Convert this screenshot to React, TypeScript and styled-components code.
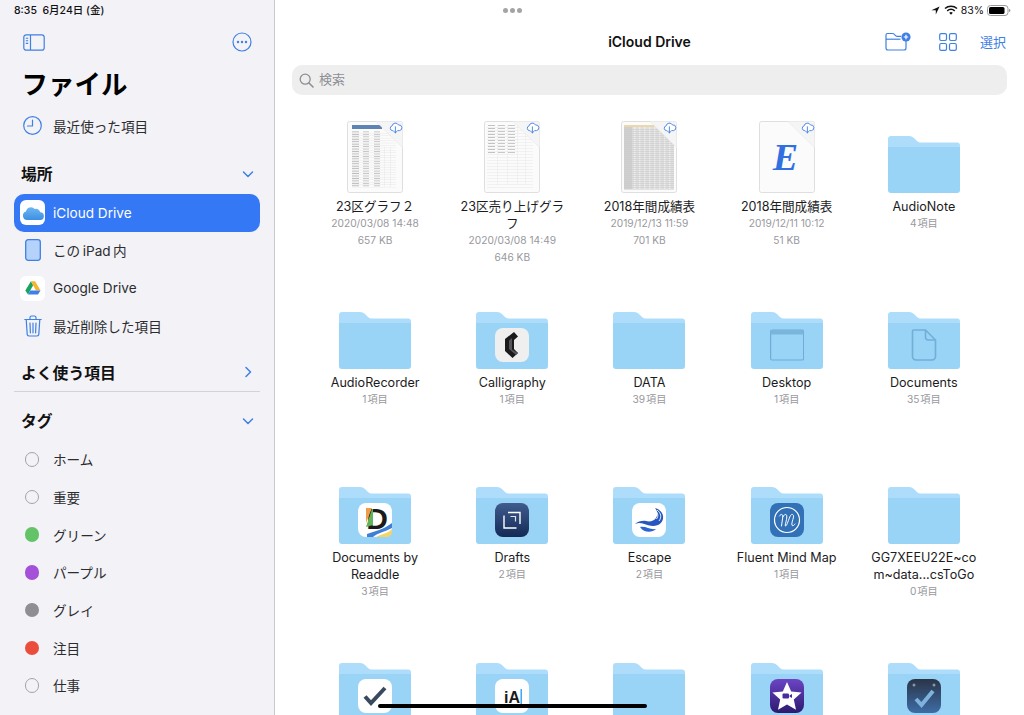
import React from 'react'
import styled, { createGlobalStyle } from 'styled-components'

const GlobalStyle = createGlobalStyle`
  html, body {
    margin: 0;
    height: 715px;
    overflow: hidden;
    background: #fff;
    font-family: Inter, "Noto Sans CJK JP", sans-serif;
    color: #1c1c1e;
  }
`

const BLUE = '#3f80e4'

const Page = styled.div`
  display: flex;
  width: 1024px;
  height: 715px;
  overflow: hidden;
  position: relative;
`

const Sidebar = styled.aside`
  width: 275px;
  flex: none;
  box-sizing: border-box;
  background: #f2f2f7;
  border-right: 1px solid #c9c9cd;
  padding: 0 14px;
`

const Clock = styled.div`
  height: 20px;
  line-height: 21px;
  font-size: 10.5px;
  font-weight: 500;
  color: #111;
  white-space: pre;
`

const SideTools = styled.div`
  height: 44px;
  display: flex;
  align-items: center;
  justify-content: space-between;
  padding: 0 8px 0 9px;
`

const Title = styled.h1`
  margin: 0 0 3px;
  height: 40px;
  line-height: 40px;
  padding-left: 7.5px;
  font-size: 26.5px;
  font-weight: 700;
  color: #000;
`

const Row = styled.div<{ $active?: boolean }>`
  height: 37.7px;
  box-sizing: border-box;
  display: flex;
  align-items: center;
  gap: 8px;
  padding-left: 6px;
  border-radius: 10px;
  font-size: 13.6px;
  color: ${(p) => (p.$active ? '#fff' : '#2c2c2e')};
  background: ${(p) => (p.$active ? '#3478f6' : 'transparent')};
`

const IconSlot = styled.span`
  width: 25px;
  height: 25px;
  flex: none;
  display: flex;
  align-items: center;
  justify-content: center;
`

const Tile = styled(IconSlot)`
  background: #fff;
  border-radius: 6px;
`

const Dot = styled.span<{ $color?: string }>`
  width: 14.5px;
  height: 14.5px;
  margin-right: 1px;
  box-sizing: border-box;
  border-radius: 50%;
  background: ${(p) => p.$color ?? 'transparent'};
  border: ${(p) => (p.$color ? 'none' : '1px solid #a3a3a8')};
`

const Section = styled.div<{ $top: number; $bottom?: number; $line?: boolean }>`
  height: 37.7px;
  margin: ${(p) => p.$top}px 0 ${(p) => p.$bottom ?? 0}px;
  box-sizing: border-box;
  display: flex;
  align-items: center;
  justify-content: space-between;
  padding: 0 6px 0 7px;
  font-size: 15.8px;
  font-weight: 700;
  color: #111;
  border-bottom: ${(p) => (p.$line ? '1px solid #d4d4d8' : 'none')};
`

const Main = styled.main`
  flex: 1;
  min-width: 0;
  padding: 0 17px;
  overflow: hidden;
`

const StatusBar = styled.div`
  height: 20px;
  display: grid;
  grid-template-columns: 211px auto 1fr;
  align-items: center;
`

const Grabber = styled.div`
  display: flex;
  gap: 2px;
`

const GrabDot = styled.span`
  width: 5px;
  height: 5px;
  border-radius: 50%;
  background: #a4a4a8;
`

const StatusRight = styled.div`
  display: flex;
  align-items: center;
  justify-content: flex-end;
  gap: 3px;
  margin-right: -4px;
  font-size: 10.5px;
  font-weight: 400;
  color: #111;
`

const Header = styled.header`
  height: 44px;
  display: grid;
  grid-template-columns: 1fr auto 1fr;
  align-items: center;
`

const HeaderTitle = styled.div`
  font-size: 14px;
  font-weight: 600;
  color: #111;
  margin-top: -1px;
`

const Actions = styled.div`
  display: flex;
  align-items: center;
  justify-content: flex-end;
  gap: 23px;
  margin-top: -1px;
`

const NewFolder = styled.svg`
  margin-right: 5px;
`

const SelectLink = styled.span`
  font-size: 13px;
  color: ${BLUE};
  margin-right: 1px;
  margin-top: -1px;
`

const Search = styled.div`
  height: 30px;
  margin-top: 1px;
  display: flex;
  align-items: center;
  gap: 5px;
  padding-left: 7px;
  border-radius: 10px;
  background: #eeeeef;
  font-size: 13px;
  color: #8e8e93;
`

const SearchText = styled.span`
  margin-top: -3px;
`

const FileGrid = styled.div`
  display: grid;
  grid-template-columns: repeat(5, 137.2px);
  grid-auto-rows: 175.5px;
  margin: 22px 0 0 14.5px;
`

const Cell = styled.div`
  display: flex;
  flex-direction: column;
  align-items: center;
  text-align: center;
`

const ThumbArea = styled.div`
  height: 76px;
  flex: none;
  display: flex;
  align-items: flex-end;
  margin-bottom: 5px;
`

const FolderBox = styled.div`
  position: relative;
  width: 72px;
  height: 57px;
`

const Badge = styled.div`
  position: absolute;
  left: 19px;
  top: 16px;
  width: 34px;
  height: 34px;
`

const Name = styled.div`
  width: 116px;
  font-size: 12.6px;
  line-height: 17px;
  color: #1c1c1e;
  overflow-wrap: anywhere;
`

const Meta = styled.div`
  font-size: 10.2px;
  line-height: 17px;
  color: #98989d;
`

const HomeBar = styled.div`
  position: absolute;
  left: 378px;
  bottom: 7px;
  width: 269px;
  height: 4px;
  border-radius: 2px;
  background: #000;
`

const Folder = ({ children }: { children?: React.ReactNode }) => (
  <FolderBox>
    <svg width="72" height="57" viewBox="0 0 72 57" style={{ display: 'block' }}>
      <path d="M3 0H21Q24 0 26 2L29 5Q30.5 6.5 33 6.5H69Q72 6.5 72 9.5V20H0V3Q0 0 3 0Z" fill="#aeddfb" />
      <path d="M0 11H72V54Q72 57 69 57H3Q0 57 0 54Z" fill="#99d3f6" />
    </svg>
    {children}
  </FolderBox>
)

const Cloud = ({ x, y }: { x: number; y: number }) => (
  <g transform={`translate(${x} ${y})`} fill="none" stroke={BLUE} strokeWidth="0.9" strokeLinecap="round" strokeLinejoin="round">
    <path d="M3.4 8.6H2.8A2.4 2.4 0 0 1 2.6 3.9 3.4 3.4 0 0 1 9 3 2.8 2.8 0 0 1 10 8.6H8.4" fill="#fff" />
    <path d="M5.9 4.8V10.8M4.2 9.2L5.9 10.9 7.6 9.2" />
  </g>
)

const sheetRows = (count: number, top: number, step: number) =>
  Array.from({ length: count }, (_, i) => top + i * step)

const Sheet1 = () => (
  <>
    <rect x="5" y="4" width="30" height="4" fill="#5f83b2" />
    {sheetRows(23, 10.5, 2.45).map((y) => (
      <g key={y}>
        <rect x="5" y={y} width="7" height="0.8" fill="#b0b0b0" />
        <rect x="16" y={y} width="6" height="0.8" fill="#bcbcbc" />
        <rect x="27" y={y} width="6" height="0.8" fill="#bcbcbc" />
        <rect x="5" y={y + 1.5} width="44" height="0.4" fill="#e4e4e4" />
      </g>
    ))}
    <rect x="37" y="26" width="0.4" height="40" fill="#e4e4e4" />
    <rect x="43" y="26" width="0.4" height="40" fill="#e4e4e4" />
  </>
)

const Sheet2 = () => (
  <>
    {sheetRows(10, 4, 3).map((y) => (
      <g key={y}>
        <rect x="4" y={y} width="7" height="0.8" fill="#b4b4b4" />
        <rect x="14" y={y} width="7" height="0.8" fill="#bcbcbc" />
        <rect x="24" y={y} width="7" height="0.8" fill="#bcbcbc" />
      </g>
    ))}
    {sheetRows(21, 4, 3).map((y) => (
      <rect key={y} x="3" y={y + 2} width="46" height="0.4" fill="#e2e2e2" />
    ))}
    {[13, 23, 33, 41].map((x) => (
      <rect key={x} x={x} y="4" width="0.4" height="60" fill="#e6e6e6" />
    ))}
  </>
)

const Sheet3 = () => (
  <>
    <rect x="3" y="4" width="50" height="64" fill="#dedede" />
    <rect x="3" y="4" width="34" height="2" fill="#ead7ab" />
    <rect x="3" y="6" width="8" height="62" fill="#cfcfcf" />
    {[13, 18, 23, 28, 33, 38, 43, 48].map((x) => (
      <rect key={x} x={x} y="6" width="1.4" height="62" fill="#eeeeee" />
    ))}
    {sheetRows(31, 8, 2).map((y) => (
      <rect key={y} x="3" y={y} width="50" height="0.5" fill="#c8c8c8" />
    ))}
  </>
)

const SheetE = () => (
  <text x="26.5" y="49" textAnchor="middle" fontFamily="Liberation Serif, serif" fontWeight="700" fontStyle="italic" fontSize="38" fill="#3270e2">
    E
  </text>
)

const Doc = ({ children }: { children: React.ReactNode }) => (
  <svg width="56" height="72" viewBox="0 0 56 72" style={{ display: 'block' }}>
    <rect x="0.5" y="0.5" width="55" height="71" rx="2" fill="#fbfbfb" stroke="#dfdfdf" />
    {children}
    <path d="M29 0.5H53.5Q55.5 0.5 55.5 2.5V26.5Z" fill="#f5f5f5" />
    <path d="M29 0.5L55.5 26.5" stroke="#e4e4e4" strokeWidth="0.5" fill="none" />
    <Cloud x={42.5} y={1} />
  </svg>
)

const Rounded = ({ fill, children }: { fill: string; children?: React.ReactNode }) => (
  <svg width="34" height="34" viewBox="0 0 34 34" style={{ display: 'block' }}>
    <rect width="34" height="34" rx="8" fill={fill} />
    {children}
  </svg>
)

const CalligraphyIcon = () => (
  <Rounded fill="#efefef">
    <path d="M19 4L23 8.5 19 12V21L23 25 17.5 30 10 23V11Z" fill="#1b1b1b" />
    <path d="M14 12.5L17 10V21.5L23 25 21 27 14 21Z" fill="#55555a" />
  </Rounded>
)

const ReaddleIcon = () => (
  <Rounded fill="#fff">
    <text x="19" y="26" textAnchor="middle" fontFamily="Liberation Sans, sans-serif" fontWeight="700" fontSize="30" fill="#1a1a1a">
      D
    </text>
    <path d="M8 5H14L8 20Z" fill="#ef9d4c" />
    <path d="M8 24L14 6H15V22Z" fill="#62b45a" />
    <path d="M9 31C17 28 25 27 34 20V25C27 29 19 30 15 34H9Z" fill="#3f7fd6" />
    <path d="M18 34C23 31 29 31 34 26V28Q34 34 28 34Z" fill="#f0d668" />
  </Rounded>
)

const DraftsIcon = () => (
  <svg width="34" height="34" viewBox="0 0 34 34" style={{ display: 'block' }}>
    <defs>
      <linearGradient id="drafts" x1="0" y1="0" x2="0" y2="1">
        <stop offset="0" stopColor="#3f5d8e" />
        <stop offset="1" stopColor="#142a56" />
      </linearGradient>
    </defs>
    <rect width="34" height="34" rx="8" fill="url(#drafts)" />
    <path d="M13 9.5H25V21" fill="none" stroke="#fff" strokeWidth="1.4" />
    <path d="M9 12.5V25H21.5" fill="none" stroke="#fff" strokeWidth="1.4" />
    <path d="M15.5 13.5H20.5V18.5" fill="none" stroke="#dfe6f0" strokeWidth="1.2" />
  </svg>
)

const EscapeIcon = () => (
  <Rounded fill="#fff">
    <path d="M3 21C10 18 14 23 21 23 27 23 32 19 31 13 30.5 9 27 6 23 5 26 9 26 12 24 15 22 18 18 19 14 18 11 17.5 6 18 3 21Z" fill="#2657bf" />
    <path d="M8 24C14 23 18 27 24 26 20 30 12 30 8 24Z" fill="#2b66cf" />
    <path d="M21 7C26 8 27 13 24.5 16" fill="none" stroke="#fff" strokeWidth="0.9" />
    <path d="M25 7C29 10 30 14 27 18" fill="none" stroke="#fff" strokeWidth="0.9" />
  </Rounded>
)

const FluentIcon = () => (
  <Rounded fill="#3371b7">
    <circle cx="17" cy="17" r="12.5" fill="none" stroke="#fff" strokeWidth="1.2" />
    <path d="M9.5 13C11 10.5 13 11 12.8 14L11.5 23M12.8 14C14.5 10.5 17 10.5 16.8 14 16.6 18 14.5 23 15.5 23 17 23 18.6 16 20.5 12.5 22 10.5 24 11.5 23.5 14 23 17 21 21 22.2 22.5 23 23.2 24.3 22 25 21" fill="none" stroke="#fff" strokeWidth="1" strokeLinecap="round" />
  </Rounded>
)

const CheckIcon = () => (
  <Rounded fill="#fff">
    <path d="M7 17.5L13 24 27 9" fill="none" stroke="#3a4a5e" strokeWidth="4" />
  </Rounded>
)

const IaIcon = () => (
  <Rounded fill="#fff">
    <text x="9" y="24" fontFamily="Liberation Sans, sans-serif" fontWeight="700" fontSize="16" fill="#1a1a1a">
      iA
    </text>
    <rect x="25.5" y="10" width="1.4" height="16" fill="#2ea3f2" />
  </Rounded>
)

const ImovieIcon = () => (
  <svg width="34" height="34" viewBox="0 0 34 34" style={{ display: 'block' }}>
    <defs>
      <linearGradient id="imovie" x1="0" y1="0" x2="0" y2="1">
        <stop offset="0" stopColor="#6d44c4" />
        <stop offset="1" stopColor="#2c1a6e" />
      </linearGradient>
    </defs>
    <rect width="34" height="34" rx="8" fill="url(#imovie)" />
    <path d="M17 3L21.2 12.6 31.6 13.6 23.8 20.6 26 30.8 17 25.5 8 30.8 10.2 20.6 2.4 13.6 12.8 12.6Z" fill="#fff" />
    <rect x="12.5" y="14.5" width="6.5" height="5" rx="1" fill="#4a2aa0" />
    <path d="M19.5 16.5L22 15V19L19.5 17.5Z" fill="#4a2aa0" />
  </svg>
)

const TasksIcon = () => (
  <svg width="34" height="34" viewBox="0 0 34 34" style={{ display: 'block' }}>
    <defs>
      <linearGradient id="tasks" x1="0" y1="0" x2="0" y2="1">
        <stop offset="0" stopColor="#2a3446" />
        <stop offset="1" stopColor="#3d6da6" />
      </linearGradient>
    </defs>
    <rect width="34" height="34" rx="8" fill="url(#tasks)" />
    <circle cx="7" cy="6" r="1.5" fill="#8a94a4" />
    <circle cx="27" cy="6" r="1.5" fill="#8a94a4" />
    <path d="M9 20L14.5 26 26 12" fill="none" stroke="#7fb2dc" strokeWidth="4" />
  </svg>
)

const WindowGlyph = () => (
  <svg width="34" height="34" viewBox="0 0 34 34" style={{ display: 'block' }}>
    <rect x="0.6" y="2" width="33" height="30" rx="1.5" fill="none" stroke="#6fadd6" strokeWidth="1.2" />
    <rect x="0.6" y="2" width="33" height="4.5" fill="#7ab6dc" />
  </svg>
)

const PageGlyph = () => (
  <svg width="34" height="34" viewBox="0 0 34 34" style={{ display: 'block' }}>
    <path d="M7 2H18.5L28.5 12V28Q28.5 32 24.5 32H9.5Q5.5 32 5.5 28V3.5Q5.5 2 7 2Z" fill="none" stroke="#71afd8" strokeWidth="1.6" />
    <path d="M18.5 2V9Q18.5 12 21.5 12H28.5" fill="none" stroke="#71afd8" strokeWidth="1.6" />
  </svg>
)

type Item = {
  name?: string
  meta?: string[]
  doc?: React.ReactNode
  badge?: React.ReactNode
}

const items: Item[] = [
  { name: '23区グラフ２', meta: ['2020/03/08 14:48', '657 KB'], doc: <Sheet1 /> },
  { name: '23区売り上げグラフ', meta: ['2020/03/08 14:49', '646 KB'], doc: <Sheet2 /> },
  { name: '2018年間成績表', meta: ['2019/12/13 11:59', '701 KB'], doc: <Sheet3 /> },
  { name: '2018年間成績表', meta: ['2019/12/11 10:12', '51 KB'], doc: <SheetE /> },
  { name: 'AudioNote', meta: ['4\u200a項目'] },
  { name: 'AudioRecorder', meta: ['1\u200a項目'] },
  { name: 'Calligraphy', meta: ['1\u200a項目'], badge: <CalligraphyIcon /> },
  { name: 'DATA', meta: ['39\u200a項目'] },
  { name: 'Desktop', meta: ['1\u200a項目'], badge: <WindowGlyph /> },
  { name: 'Documents', meta: ['35\u200a項目'], badge: <PageGlyph /> },
  { name: 'Documents by Readdle', meta: ['3\u200a項目'], badge: <ReaddleIcon /> },
  { name: 'Drafts', meta: ['2\u200a項目'], badge: <DraftsIcon /> },
  { name: 'Escape', meta: ['2\u200a項目'], badge: <EscapeIcon /> },
  { name: 'Fluent Mind Map', meta: ['1\u200a項目'], badge: <FluentIcon /> },
  { name: 'GG7XEEU22E~com~data...csToGo', meta: ['0\u200a項目'] },
  { badge: <CheckIcon /> },
  { badge: <IaIcon /> },
  {},
  { badge: <ImovieIcon /> },
  { badge: <TasksIcon /> },
]

const tags: { label: string; color?: string }[] = [
  { label: 'ホーム' },
  { label: '重要' },
  { label: 'グリーン', color: '#62c466' },
  { label: 'パープル', color: '#a550d8' },
  { label: 'グレイ', color: '#8e8e93' },
  { label: '注目', color: '#eb4d3d' },
  { label: '仕事' },
]

const Chevron = ({ right }: { right?: boolean }) => (
  <svg width="12" height="12" viewBox="0 0 12 12" fill="none" stroke={BLUE} strokeWidth="1.5" strokeLinecap="round" strokeLinejoin="round">
    <path d={right ? 'M4 1.5L8.5 6 4 10.5' : 'M1.5 4L6 8.5 10.5 4'} />
  </svg>
)

export default function App() {
  return (
    <Page>
      <GlobalStyle />
      <Sidebar>
        <Clock>8:35  6月24日 (金)</Clock>
        <SideTools>
          <svg width="22" height="17" viewBox="0 0 22 17" fill="none" stroke={BLUE} strokeWidth="1.2">
            <rect x="0.8" y="0.8" width="20.4" height="15.4" rx="2.5" />
            <path d="M7.5 1V16" />
            <path d="M2.8 4.2H5.2M2.8 6.8H5.2M2.8 9.4H5.2" strokeWidth="1.1" />
          </svg>
          <svg width="20" height="20" viewBox="0 0 20 20">
            <circle cx="10" cy="10" r="9" fill="none" stroke={BLUE} strokeWidth="1.2" />
            <circle cx="6" cy="10" r="1.2" fill={BLUE} />
            <circle cx="10" cy="10" r="1.2" fill={BLUE} />
            <circle cx="14" cy="10" r="1.2" fill={BLUE} />
          </svg>
        </SideTools>
        <Title>ファイル</Title>
        <Row>
          <IconSlot>
            <svg width="19" height="19" viewBox="0 0 19 19" fill="none" stroke={BLUE} strokeWidth="1.2">
              <circle cx="9.5" cy="9.5" r="8.8" />
              <path d="M9.5 4V10H4.5" strokeLinecap="round" strokeLinejoin="round" />
            </svg>
          </IconSlot>
          最近使った項目
        </Row>
        <Section $top={10} $bottom={1.5}>
          場所
          <Chevron />
        </Section>
        <Row $active>
          <Tile>
            <svg width="22" height="14" viewBox="0 0 22 14">
              <defs>
                <linearGradient id="icloud" x1="0" y1="0" x2="0" y2="1">
                  <stop offset="0" stopColor="#6cb7f2" />
                  <stop offset="1" stopColor="#3f8fe2" />
                </linearGradient>
              </defs>
              <path d="M5 14A4.3 4.3 0 0 1 4 5.6 5 5 0 0 1 12.8 3 4.2 4.2 0 0 1 18.2 6.2 3.9 3.9 0 0 1 17.8 14Z" fill="url(#icloud)" />
            </svg>
          </Tile>
          iCloud Drive
        </Row>
        <Row>
          <IconSlot>
            <svg width="16" height="22" viewBox="0 0 16 22">
              <rect x="0.7" y="0.7" width="14.6" height="20.6" rx="2.5" fill="#b5d2fa" stroke={BLUE} strokeWidth="1.3" />
            </svg>
          </IconSlot>
          この{'\u2009'}iPad{'\u2009'}内
        </Row>
        <Row>
          <Tile>
            <svg width="20" height="20" viewBox="0 0 24 24">
              <path d="M9.5 4L12.2 8.8 6 19.8 2.8 15Z" fill="#1aa260" />
              <path d="M9.5 4H14.5L21 15H15.6Z" fill="#f6b52c" />
              <path d="M8.8 15H21L18 19.8H6Z" fill="#3f7fe8" />
            </svg>
          </Tile>
          Google Drive
        </Row>
        <Row>
          <IconSlot>
            <svg width="18" height="22" viewBox="0 0 18 22" fill="none" stroke={BLUE} strokeWidth="1.2" strokeLinecap="round">
              <path d="M0.8 4.5H17.2M6 4.5V2.6Q6 1 7.6 1H10.4Q12 1 12 2.6V4.5" />
              <path d="M2.2 4.5L3.2 19.4Q3.3 21 5 21H13Q14.7 21 14.8 19.4L15.8 4.5" />
              <path d="M6 8L6.4 17.8M9 8V17.8M12 8L11.6 17.8" />
            </svg>
          </IconSlot>
          最近削除した項目
        </Row>
        <Section $top={9.5} $line>
          よく使う項目
          <Chevron right />
        </Section>
        <Section $top={10} $bottom={1}>
          タグ
          <Chevron />
        </Section>
        {tags.map((tag) => (
          <Row key={tag.label}>
            <IconSlot>
              <Dot $color={tag.color} />
            </IconSlot>
            {tag.label}
          </Row>
        ))}
      </Sidebar>
      <Main>
        <StatusBar>
          <span />
          <Grabber>
            <GrabDot />
            <GrabDot />
            <GrabDot />
          </Grabber>
          <StatusRight>
            <svg width="9" height="9" viewBox="0 0 9 9" style={{ marginRight: 1 }}>
              <path d="M8.6 0.4L0.4 4.2H4.8V8.6Z" fill="#111" />
            </svg>
            <svg width="14" height="10" viewBox="0 0 14 10" fill="none" stroke="#111" strokeWidth="1.5" strokeLinecap="butt">
              <path d="M1 3.5A9 9 0 0 1 13 3.5" />
              <path d="M3.2 5.8A6 6 0 0 1 10.8 5.8" />
              <path d="M7 9.8L5.2 7.8A2.8 2.8 0 0 1 8.8 7.8Z" fill="#111" stroke="none" />
            </svg>
            83%
            <svg width="24" height="11" viewBox="0 0 24 11">
              <rect x="0.5" y="0.5" width="20.5" height="10" rx="3" fill="none" stroke="#9a9a9a" />
              <rect x="2" y="2" width="15.5" height="7" rx="1.6" fill="#000" />
              <path d="M22 3.8Q23.4 4.3 23.4 5.5T22 7.2Z" fill="#9a9a9a" />
            </svg>
          </StatusRight>
        </StatusBar>
        <Header>
          <span />
          <HeaderTitle>iCloud Drive</HeaderTitle>
          <Actions>
            <NewFolder width="26" height="19" viewBox="0 0 26 19" fill="none" stroke={BLUE} strokeWidth="1.2">
              <path d="M21 8.5V16Q21 18 19 18H3Q1 18 1 16V3Q1 1.5 2.5 1.5H7.5Q8.7 1.5 9.5 2.5L10.5 3.7Q11 4.3 12 4.3H16" />
              <path d="M1 7.2H15.5" />
              <circle cx="21" cy="5" r="4.6" fill={BLUE} stroke="none" />
              <path d="M21 2.8V7.2M18.8 5H23.2" stroke="#fff" strokeWidth="1.2" />
            </NewFolder>
            <svg width="18" height="18" viewBox="0 0 18 18" fill="none" stroke={BLUE} strokeWidth="1.2">
              <rect x="0.7" y="0.7" width="6.8" height="6.8" rx="1.4" />
              <rect x="10.5" y="0.7" width="6.8" height="6.8" rx="1.4" />
              <rect x="0.7" y="10.5" width="6.8" height="6.8" rx="1.4" />
              <rect x="10.5" y="10.5" width="6.8" height="6.8" rx="1.4" />
            </svg>
            <SelectLink>選択</SelectLink>
          </Actions>
        </Header>
        <Search>
          <svg width="15" height="15" viewBox="0 0 15 15" fill="none" stroke="#8e8e93" strokeWidth="1.3" strokeLinecap="round">
            <circle cx="6.2" cy="6.2" r="5" />
            <path d="M10 10L14 14" strokeWidth="1.6" />
          </svg>
          <SearchText>検索</SearchText>
        </Search>
        <FileGrid>
          {items.map((item, i) => (
            <Cell key={i}>
              <ThumbArea>
                {item.doc ? (
                  <Doc>{item.doc}</Doc>
                ) : (
                  <Folder>{item.badge && <Badge>{item.badge}</Badge>}</Folder>
                )}
              </ThumbArea>
              {item.name && <Name>{item.name}</Name>}
              {item.meta?.map((line) => (
                <Meta key={line}>{line}</Meta>
              ))}
            </Cell>
          ))}
        </FileGrid>
      </Main>
      <HomeBar />
    </Page>
  )
}
